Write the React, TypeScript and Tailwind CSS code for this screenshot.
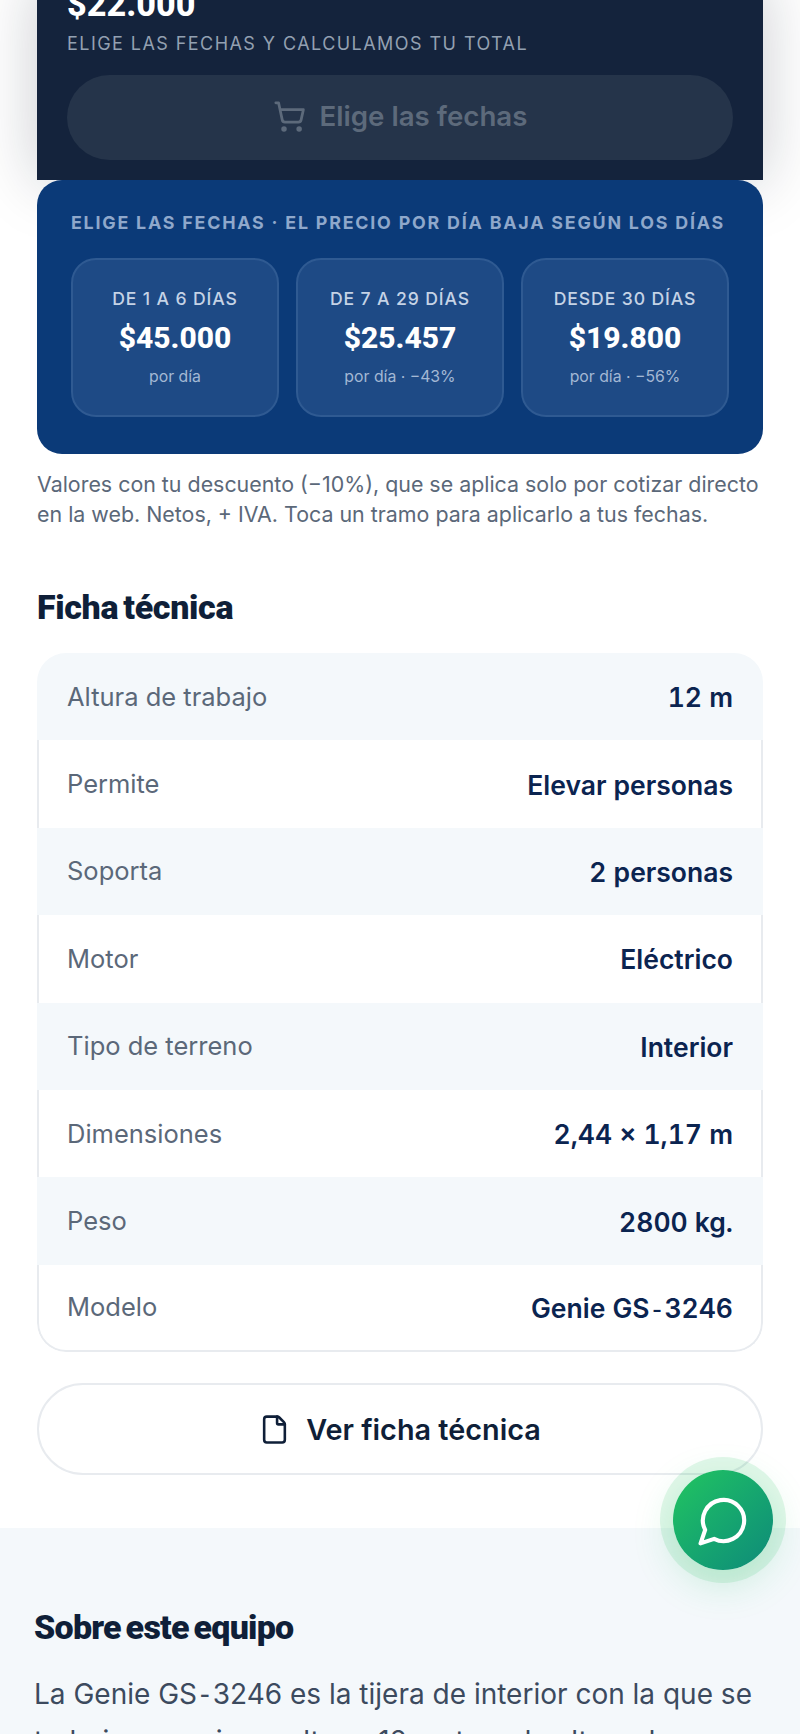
import { ShoppingCart, File } from "lucide-react";

const TIERS = [
  { label: "DE 1 A 6 DÍAS", price: "$45.000", note: "por día" },
  { label: "DE 7 A 29 DÍAS", price: "$25.457", note: "por día · −43%" },
  { label: "DESDE 30 DÍAS", price: "$19.800", note: "por día · −56%" },
];

const SPECS = [
  ["Altura de trabajo", "12 m"],
  ["Permite", "Elevar personas"],
  ["Soporta", "2 personas"],
  ["Motor", "Eléctrico"],
  ["Tipo de terreno", "Interior"],
  ["Dimensiones", "2,44 × 1,17 m"],
  ["Peso", "2800 kg."],
];

// The non-breaking hyphen falls back to another font in the reference, with wide sides
function Hyphen() {
  return <span className="px-[0.1em] font-['DejaVu_Sans',sans-serif] font-normal">‑</span>;
}

export default function App() {
  return (
    <div className="relative h-[1734px] overflow-hidden bg-white font-['Inter',sans-serif]">
      <div className="px-[37px]">
        {/* Dark price panel, scrolled past the top */}
        <div className="mt-[-20px] h-[200px] bg-[#14233c] px-[30px] shadow-[0_0_60px_rgba(15,23,42,0.22)]">
          <div className="h-[48px] font-['Roboto',sans-serif] text-[34.2px] leading-[48px] font-extrabold text-white">$22.000</div>
          <div className="mt-[4px] text-[18px] leading-[24px] tracking-[0.08em] text-[#93a0b1]">
            ELIGE LAS FECHAS Y CALCULAMOS TU TOTAL
          </div>
          <div className="mt-[19px] flex h-[85px] items-center justify-center gap-[14px] rounded-full bg-[#25344a] pb-[2px] text-[27.7px] font-semibold text-[#5d6a7b]">
            <ShoppingCart size={33} strokeWidth={2} />
            Elige las fechas
          </div>
        </div>

        {/* Price tiers */}
        <div className="relative rounded-[25px] bg-[#0b3a78] px-[34px] pt-[31px] pb-[37px]">
          <div className="text-[17.85px] leading-[24px] font-bold tracking-[0.1em] whitespace-nowrap text-[#8fa8cb]">
            ELIGE LAS FECHAS · EL PRECIO POR DÍA BAJA SEGÚN LOS DÍAS
          </div>
          <div className="mt-[23px] grid grid-cols-3 gap-[17px]">
            {TIERS.map((t) => (
              <div
                key={t.label}
                className="flex h-[159px] flex-col items-center rounded-[25px] border-2 border-[#2f5a92] bg-[#1e4a85] pt-[27px]"
              >
                <div className="text-[17.6px] leading-[24px] font-medium tracking-[0.05em] text-[#c5d3e6]">{t.label}</div>
                <div className="mt-[9px] font-['Roboto',sans-serif] text-[30px] leading-[36px] font-extrabold text-white">{t.price}</div>
                <div className="mt-[9px] text-[15.8px] leading-[24px] text-[#a3b8d4]">{t.note}</div>
              </div>
            ))}
          </div>
        </div>

        <p className="mt-[15px] text-[21.4px] leading-[30px] text-[#5b6879]">
          Valores con tu descuento (−10%), que se aplica solo por cotizar directo en la web. Netos, + IVA. Toca un tramo para aplicarlo a tus fechas.
        </p>

        <h2 className="mt-[56px] font-['Roboto',sans-serif] text-[34px] leading-[44px] font-black tracking-[-0.01em] [word-spacing:-3px] text-[#0f1f38]">Ficha técnica</h2>

        {/* Spec table */}
        <div className="mt-[24px] overflow-hidden rounded-[29px]">
          {SPECS.map(([k, v], i) => (
            <div
              key={k}
              className={
                i % 2 === 0
                  ? "flex h-[87.4px] items-center justify-between bg-[#f4f8fb] px-[30px]"
                  : "flex h-[87.4px] items-center justify-between border-x-2 border-[#e8ebef] bg-white px-[28px]"
              }
            >
              <span className="text-[25.5px] text-[#5b6879]">{k}</span>
              <span className="mt-[3px] text-[26.5px] font-semibold text-[#0b2450] tabular-nums">{v}</span>
            </div>
          ))}
          <div className="flex h-[87.4px] items-center justify-between rounded-b-[29px] border-x-2 border-b-2 border-[#e8ebef] bg-white px-[28px]">
            <span className="text-[25.5px] text-[#5b6879]">Modelo</span>
            <span className="mt-[3px] text-[26.5px] font-semibold text-[#0b2450] tabular-nums">Genie GS<Hyphen />3246</span>
          </div>
        </div>

        <div className="mt-[31px] flex h-[92px] items-center justify-center gap-[16px] rounded-full border-2 border-[#e8ebef] bg-white text-[28.8px] font-semibold text-[#0f1f38]">
          <File size={31} strokeWidth={2} />
          Ver ficha técnica
        </div>
      </div>

      {/* About section */}
      <div className="mt-[53px] bg-[#f4f8fb] px-[34px] pt-[77px]">
        <h2 className="font-['Roboto',sans-serif] text-[34px] leading-[44px] font-black tracking-[-0.022em] [word-spacing:-3px] text-[#0f1f38]">Sobre este equipo</h2>
        <p className="mt-[22px] text-[28px] leading-[47px] text-[#3c4a5e]">
          La Genie GS<Hyphen />3246 es la tijera de interior con la que se trabaja en serie en altura. 12 metros de altura de
        </p>
      </div>

      {/* WhatsApp floating button */}
      <div className="absolute top-[1470px] left-[673px] flex h-[100px] w-[100px] items-center justify-center rounded-full bg-gradient-to-br from-[#22c55e] to-[#0f8a78] shadow-[0_0_0_13px_rgba(34,197,94,0.13),0_12px_40px_rgba(34,197,94,0.22)]">
        <svg width="55" height="55" viewBox="0 0 24 24" fill="none" stroke="white" strokeWidth="1.8" strokeLinecap="round" strokeLinejoin="round">
          <path d="M7.9 20A9 9 0 1 0 4 16.1L2 22Z" />
        </svg>
      </div>
    </div>
  );
}
